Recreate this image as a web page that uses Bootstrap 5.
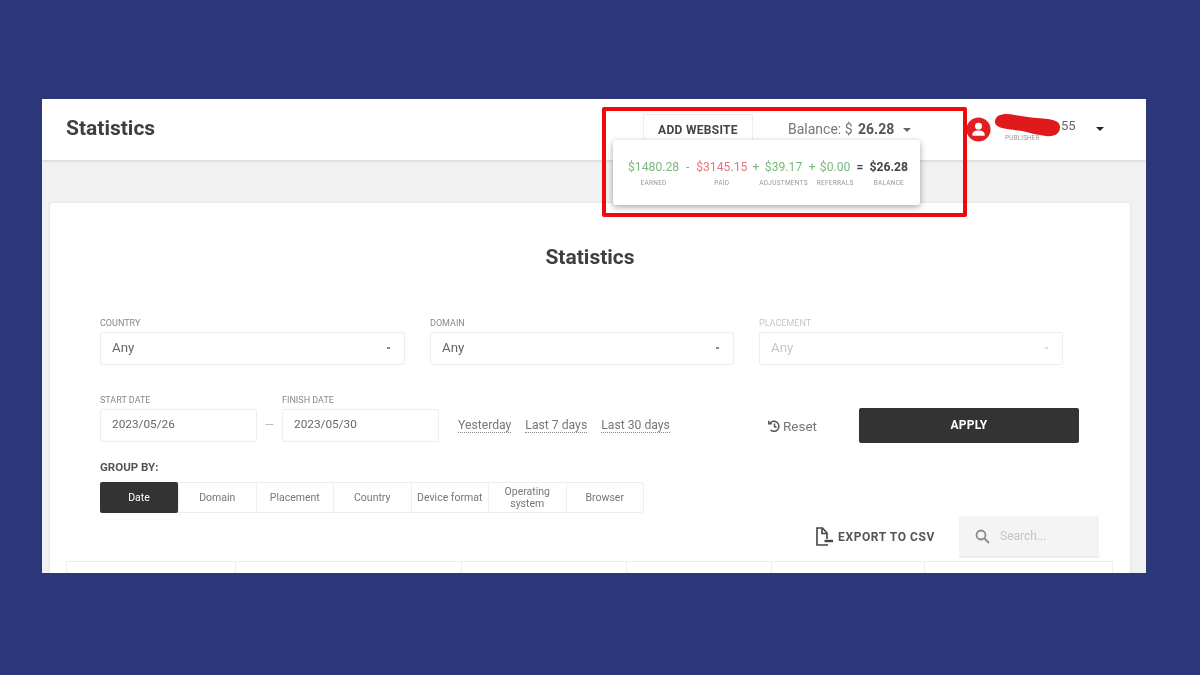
<!DOCTYPE html>
<html lang="en">
<head>
<meta charset="utf-8">
<title>Statistics</title>
<link href="https://cdn.jsdelivr.net/npm/bootstrap@5.3.0/dist/css/bootstrap.min.css" rel="stylesheet">
<style>
html,body{height:100%}
body{background:#2b3779;font-family:Roboto,"Liberation Sans",sans-serif;color:#333;overflow:hidden}
.stage{padding:99px 54px 0 42px;height:675px}
.shot{position:relative;height:474px;background:#f1f1f1;overflow:hidden;filter:blur(.45px)}
.topbar{height:61px;background:#fff;box-shadow:0 1px 3px rgba(0,0,0,.14);padding-left:24px}
.topbar>*{flex-shrink:0}
.page-name{font-size:21px;font-weight:700;color:#3f3f3f;margin:0 0 2px;width:577px}
.add-site{width:110px;height:32px;border:1px solid #eee;border-bottom:0;background:#fff;font-size:12px;font-weight:700;letter-spacing:.3px;color:#444;padding-bottom:4px}
.bal{font-size:14px;color:#777;width:213px;padding-left:35px;white-space:nowrap}
.bal b{font-weight:700;color:#555;margin-left:2px}
.bal .caret{margin-left:5px}
.caret{display:inline-block;width:0;height:0;border-left:4px solid transparent;border-right:4px solid transparent;border-top:4px solid #666;vertical-align:middle}
.user{width:157px}
.user .caret{border-top-color:#222;position:absolute;left:1054px;top:28px}
.user-num{position:absolute;left:1019px;top:17px;font-size:13px;color:#666}
.user-role{position:absolute;left:963px;top:35px;font-size:6.500px;line-height:8px;color:#999;letter-spacing:.1px}
.blot{position:absolute;left:950px;top:14px}
.sheet{margin:43px 16px 0 8px;background:#fff;border-radius:3px;box-shadow:0 0 3px rgba(0,0,0,.1);height:380px;padding:41px 17px 0}
.sheet-name{font-size:21px;font-weight:700;text-align:center;margin:0 0 48px;color:#3f3f3f;line-height:26px}
.filters{padding:0 33px}
.fld-row{display:grid;grid-template-columns:305px 304px 304px;gap:25px;margin-bottom:30px}
.fld-label{display:block;font-size:9px;line-height:11px;color:#888;margin-bottom:3px;text-transform:uppercase;height:11px}
.fld-box{height:33px;border:1px solid #eee;border-radius:3px;font-size:13.300px;color:#666;padding:0 11px 1px;display:flex;align-items:center;justify-content:space-between;background:#fff;box-shadow:0 0 1px rgba(0,0,0,.06)}
.fld-box .tick{width:3px;height:2px;background:#888;margin-right:3px}
.off .fld-label,.off .fld-box{color:#c6c6c6}
.off .tick{background:#ddd}
.date-row{height:48px}
.date-f{width:157px}
.date-f .fld-box{font-size:11.800px}
.dash{width:25px;text-align:center;color:#bbb;font-size:12px;padding-top:21px}
.quick{margin:23px 0 0 19px;gap:14px;font-size:12.200px;width:236px;white-space:nowrap}
.quick span{color:#777;border-bottom:1px dotted #888;line-height:14px}
.reset{font-size:13.500px;color:#777;width:92px;margin:21px 0 0 73px;white-space:nowrap}
.reset svg{margin-right:2px}
.apply{width:220px;height:35px;background:#333;color:#fff;font-size:12px;font-weight:700;border:0;border-radius:2px;padding:0 0 2px;margin-top:13px;letter-spacing:.2px}
.apply:hover{background:#333;color:#fff}
.grp-title{font-size:11.500px;font-weight:700;color:#555;margin:18px 0 8px;line-height:13px}
.tabs{width:544px;height:31px;border:1px solid #eee;border-radius:3px}
.tabs>div{flex:1 1 0;display:flex;align-items:center;justify-content:center;text-align:center;font-size:10.500px;line-height:12px;color:#777;border-left:1px solid #eee}
.tabs>div:first-child{flex:0 0 78px;background:#333;color:#fff;border:0;border-radius:2px;margin:-1px 0 -1px -1px}
.tools{height:42px;margin-top:3px;padding-right:14px}
.export{font-size:12px;font-weight:700;letter-spacing:.6px;color:#555;margin-right:24px}
.srch{width:140px;height:42px;background:#f4f4f4;border-bottom:2px solid #ececec;padding-left:15px;font-size:12px;color:#c4c4c4;gap:9px}
.tbl-head{display:grid;grid-template-columns:168px 226px 165px 145px 153px 189px;height:20px;margin:3px 0 0 -1px;border:1px solid #eee;border-bottom:0}
.tbl-head>div{border-left:1px solid #eee}
.tbl-head>div:first-child{border:0}
.callout{position:absolute;left:560px;top:8px;width:365px;height:110px;border:4px solid #ee0b0d;border-radius:2px;pointer-events:none}
.pop{position:absolute;left:571px;top:41px;width:307px;height:65px;background:#fff;border-radius:3px;box-shadow:0 2px 6px rgba(0,0,0,.35);padding:20px 0 0 15px;white-space:nowrap}
.pop-col{display:flex;flex-direction:column;align-items:center;font-size:12.200px;line-height:14px}
.pop-col small{font-size:6.500px;line-height:8px;color:#999;margin-top:5px;font-weight:400;letter-spacing:.25px}
.pop-op{font-size:12px;line-height:14px;text-align:center;width:17px}
.pop-op.narrow{width:12px;text-align:right}
.pop-op.thin{width:9px}
.pop-op.wide{width:16px;text-align:left;padding-left:3px}
.gain{color:#79b97e}.loss{color:#e0787c}.sum{color:#444;font-weight:700}
</style>
</head>
<body>
<div class="stage">
  <div class="shot">
    <header class="topbar d-flex align-items-center">
      <h1 class="page-name">Statistics</h1>
      <button class="add-site btn rounded-0 p-0">ADD WEBSITE</button>
      <div class="bal">Balance: $ <b>26.28</b> <span class="caret"></span></div>
      <div class="user">
        <svg width="25" height="25" viewBox="0 0 26 26"><circle cx="13" cy="13" r="12.500" fill="#e3201f"/><circle cx="13" cy="9.500" r="3.600" fill="#fff"/><path d="M6.500 18.500c0-3 3-4.500 6.500-4.500s6.500 1.500 6.500 4.500c0 .8-.5 1-1.200 1H7.700c-.7 0-1.200-.2-1.200-1z" fill="#fff"/></svg>
        <span class="caret"></span>
      </div>
      <svg class="blot" width="72" height="28" viewBox="0 0 72 28"><path d="M3 8C4 1 13 0 23 2c10 2 22 3 33 4 7 1 12 3 12 8 0 7-6 10-14 9-9-1-15-3-24-5C17 16 2 16 3 8z" fill="#e0191c"/></svg>
      <span class="user-num">55</span>
      <span class="user-role">PUBLISHER</span>
    </header>
    <main class="sheet">
      <h2 class="sheet-name">Statistics</h2>
      <div class="filters">
        <div class="fld-row">
          <div><label class="fld-label">Country</label><div class="fld-box">Any<i class="tick"></i></div></div>
          <div><label class="fld-label">Domain</label><div class="fld-box">Any<i class="tick"></i></div></div>
          <div class="off"><label class="fld-label">Placement</label><div class="fld-box">Any<i class="tick"></i></div></div>
        </div>
        <div class="date-row d-flex align-items-start">
          <div class="date-f"><label class="fld-label">Start date</label><div class="fld-box">2023/05/26</div></div>
          <div class="dash">—</div>
          <div class="date-f"><label class="fld-label">Finish date</label><div class="fld-box">2023/05/30</div></div>
          <div class="quick d-flex"><span>Yesterday</span><span>Last 7 days</span><span>Last 30 days</span></div>
          <div class="reset d-flex align-items-center">
            <svg width="14" height="14" viewBox="0 0 14 14" fill="none" stroke="#555" stroke-width="1.500"><path d="M3 4.200A5 5 0 1 1 3.500 11"/><path d="M1.800 1.800v3h3"/><path d="M7.500 4.500v3l2 1"/></svg>Reset
          </div>
          <button class="apply btn">APPLY</button>
        </div>
        <div class="grp-title">GROUP BY:</div>
        <div class="tabs d-flex">
          <div>Date</div><div>Domain</div><div>Placement</div><div>Country</div><div>Device format</div><div>Operating<br>system</div><div>Browser</div>
        </div>
      </div>
      <div class="tools d-flex justify-content-end align-items-center">
        <div class="export d-flex align-items-center gap-1">
          <svg width="19" height="20" viewBox="0 0 19 20" fill="none" stroke="#444" stroke-width="1.600"><path d="M12 12V6L7.500 1H2v17h10v-1"/><path d="M7 1.500V6.500H12"/><path d="M9.500 14H18" stroke-width="2.400"/></svg>
          EXPORT TO CSV
        </div>
        <div class="srch d-flex align-items-center">
          <svg width="17" height="17" viewBox="0 0 17 17" fill="none" stroke="#8a8a8a" stroke-width="1.800"><circle cx="7" cy="7" r="4.500"/><path d="M10.500 10.500l4.500 4.500"/></svg>
          Search...
        </div>
      </div>
      <div class="tbl-head"><div></div><div></div><div></div><div></div><div></div><div></div></div>
    </main>
    <div class="pop d-flex align-items-start">
      <div class="pop-col gain">$1480.28<small>EARNED</small></div>
      <div class="pop-op loss">-</div>
      <div class="pop-col loss">$3145.15<small>PAID</small></div>
      <div class="pop-op narrow gain">+</div>
      <div class="pop-col gain">$39.17<small>ADJUSTMENTS</small></div>
      <div class="pop-op thin gain">+</div>
      <div class="pop-col gain">$0.00<small>REFERRALS</small></div>
      <div class="pop-op wide sum">=</div>
      <div class="pop-col sum">$26.28<small>BALANCE</small></div>
    </div>
    <div class="callout"></div>
  </div>
</div>
<script src="https://cdn.jsdelivr.net/npm/bootstrap@5.3.0/dist/js/bootstrap.bundle.min.js"></script>
</body>
</html>
